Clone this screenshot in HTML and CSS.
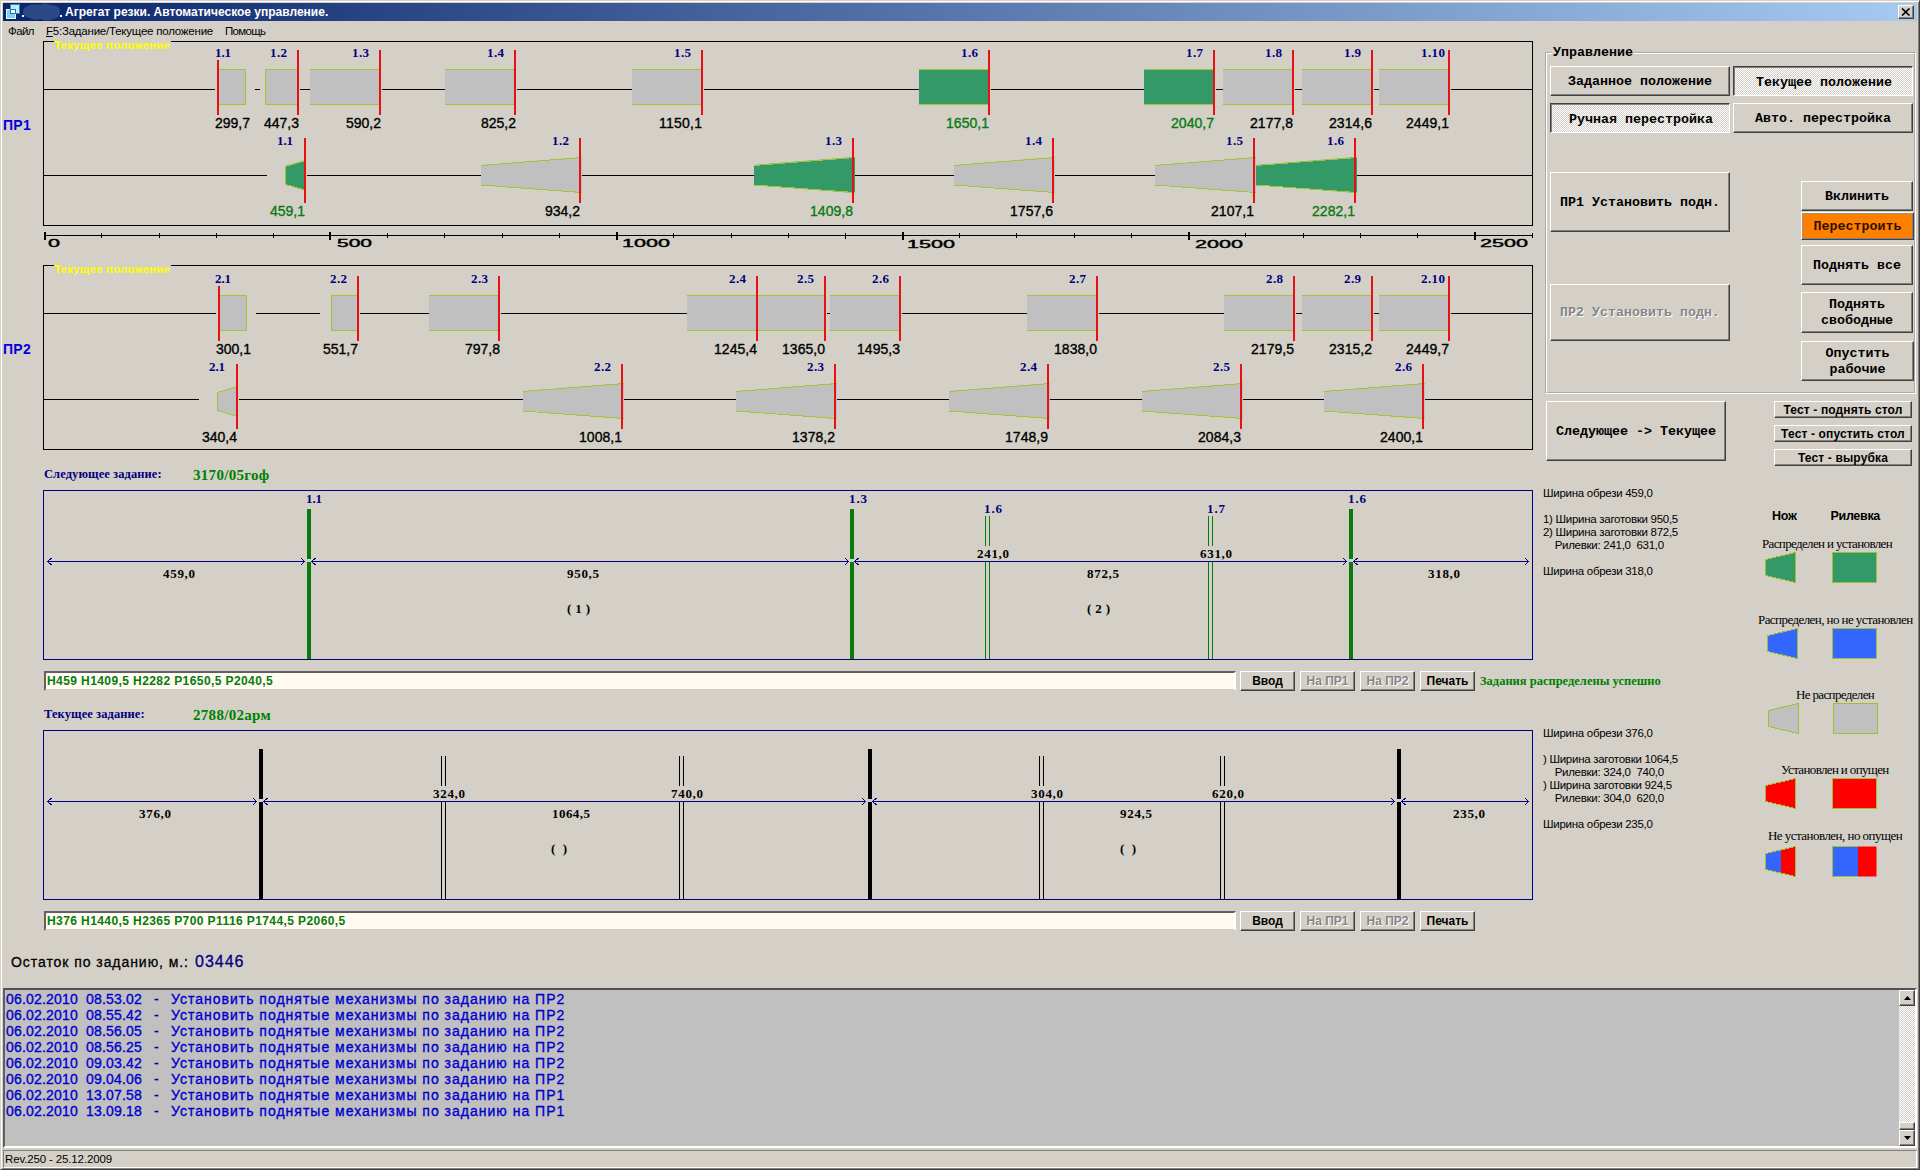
FILE: index.html
```html
<!DOCTYPE html>
<html lang="ru">
<head>
<meta charset="utf-8">
<title>Агрегат резки. Автоматическое управление.</title>
<link rel="stylesheet" href="styles.css">
</head>
<body>
<div class="window">
  <header class="titlebar">
    <svg class="app-icon" width="16" height="16" viewBox="0 0 16 16">
      <rect x="5.5" y=".5" width="9" height="9" fill="#bfefff" stroke="#2a86c8"/>
      <rect x="1.5" y="5.500" width="9" height="9" fill="#7fd4f4" stroke="#e8fbff"/>
      <rect x="5.500" y="5.500" width="5" height="4" fill="#f4ffff" stroke="#1c70b4"/>
    </svg>
    <svg class="smudge" width="40" height="18" viewBox="0 0 40 18">
      <path fill="#2b4887" d="M1 9Q1 4 6 3Q12 0 17 2Q24-1 29 2Q38 2 38 9Q38 15 31 16Q25 19 19 16Q12 18 8 15Q1 14 1 9Z"/>
      <path fill="#fff" d="M0 12h2v2h-2zM38 12h2v2h-2z"/>
    </svg>
    <h1 class="title">Агрегат резки. Автоматическое управление.</h1>
    <button class="close" aria-label="Закрыть"><svg width="10" height="8" viewBox="0 0 10 8"><path d="M1 .5L8.500 7.500M8.500 .5L1 7.500" stroke="#000" stroke-width="1.700"/></svg></button>
  </header>

  <nav class="menu">
    <span class="m1">Файл</span>
    <span class="m2"><u>F</u>5:Задание/Текущее положение</span>
    <span class="m3">Помощь</span>
  </nav>

  <main class="main">
    <section class="left">
      <div class="machine">
        <span class="machine-name">ПР1</span>
        <svg width="1490" height="185" viewBox="43 41 1490 185">
          <rect class="frame" x="43.5" y="41.5" width="1489" height="184"/>
          <rect class="cover" x="54" y="41" width="117" height="2"/>
          <text class="legend-title" x="54" y="49" textLength="116">Текущее положение</text>
          <path class="axis" d="M43 89.500H215M255 89.500h5M300 89.500h10M382 89.500h63M517 89.500h115M704 89.500h215M991 89.500h153M1216 89.500h7M1295 89.500h7M1374 89.500h5M1451 89.500h81"/>
          <path class="axis" d="M43 175.500H267M307 175.500H481M582 175.500H754M855 175.500H954M1055 175.500H1155M1357 175.500H1532"/>
          <path class="idle" d="M219 69h27v36h-27zM265 69h33v36h-33zM310 69h70v36h-70zM445 69h70v36h-70zM632 69h70v36h-70zM1223 69h70v36h-70zM1302 69h70v36h-70zM1379 69h70v36h-70z"/>
          <path class="set" d="M919 69h70v36h-70zM1144 69h70v36h-70z"/>
          <path class="edge" d="M219 69.500h26.500v35H219M298 69.500h-32.500v35H298M310 69.500h70M310 104.500h70M445 69.500h70M445 104.500h70M632 69.500h70M632 104.500h70M919 69.500h70M919 104.500h70M1144 69.500h70M1144 104.500h70M1223 69.500h70M1223 104.500h70M1302 69.500h70M1302 104.500h70M1379 69.500h70M1379 104.500h70"/>
          <path class="idle" d="M481 165L582 157V193L481 185zM954 165L1055 157V193L954 185zM1155 165L1256 157V193L1155 185z"/>
          <path class="set" d="M285 166L306 160V190L285 184zM754 165L855 157V193L754 185zM1256 165L1357 157V193L1256 185z"/>
          <path class="edge" d="M306 160.500L285.500 166.500V184.500L306 190.500M481 165.500L582 157.500M481 185L582 192.500M754 165.500L855 157.500M754 185L855 192.500M954 165.500L1055 157.500M954 185L1055 192.500M1155 165.500L1256 157.500M1155 185L1256 192.500M1256 165.500L1357 157.500M1256 185L1357 192.500"/>
          <path class="knife" d="M218 60V115M298 50V115M380 50V115M515 50V115M702 50V115M989 50V115M1214 50V115M1293 50V115M1372 50V115M1449 50V115M305 138V203M580 138V203M853 138V203M1053 138V203M1254 138V203M1355 138V203"/>
          <g class="num">
            <text x="215" y="57" textLength="16">1.1</text><text x="270" y="57" textLength="17">1.2</text><text x="352" y="57" textLength="17">1.3</text><text x="487" y="57" textLength="17">1.4</text><text x="674" y="57" textLength="17">1.5</text><text x="961" y="57" textLength="17">1.6</text><text x="1186" y="57" textLength="17">1.7</text><text x="1265" y="57" textLength="17">1.8</text><text x="1344" y="57" textLength="17">1.9</text><text x="1421" y="57" textLength="24">1.10</text>
            <text x="277" y="145" textLength="16">1.1</text><text x="552" y="145" textLength="17">1.2</text><text x="825" y="145" textLength="17">1.3</text><text x="1025" y="145" textLength="17">1.4</text><text x="1226" y="145" textLength="17">1.5</text><text x="1327" y="145" textLength="17">1.6</text>
          </g>
          <g class="pos">
            <text x="215" y="128" textLength="35">299,7</text><text x="264" y="128" textLength="35">447,3</text><text x="346" y="128" textLength="35">590,2</text><text x="481" y="128" textLength="35">825,2</text><text x="659" y="128" textLength="43">1150,1</text><text class="ok" x="946" y="128" textLength="43">1650,1</text><text class="ok" x="1171" y="128" textLength="43">2040,7</text><text x="1250" y="128" textLength="43">2177,8</text><text x="1329" y="128" textLength="43">2314,6</text><text x="1406" y="128" textLength="43">2449,1</text>
            <text class="ok" x="270" y="216" textLength="35">459,1</text><text x="545" y="216" textLength="35">934,2</text><text class="ok" x="810" y="216" textLength="43">1409,8</text><text x="1010" y="216" textLength="43">1757,6</text><text x="1211" y="216" textLength="43">2107,1</text><text class="ok" x="1312" y="216" textLength="43">2282,1</text>
          </g>
        </svg>
      </div>

      <svg class="scale" width="1490" height="39" viewBox="43 226 1490 39">
        <path class="axis" d="M45 235.500H1532M101.500 233v5M159.500 233v5M216.500 233v5M273.500 233v5M387.500 233v5M444.500 233v5M502.500 233v5M559.500 233v5M673.500 233v5M731.500 233v5M788.500 233v5M845.500 233v6M959.500 233v5M1016.500 233v5M1074.500 233v5M1131.500 233v5M1245.500 233v4M1303.500 233v5M1360.500 233v5M1417.500 233v5M1532.500 233v5"/>
        <path class="axis major" d="M45 232v8M330 232v8M617 232v8M903 232v8M1189 232v8M1475 232v8"/>
        <text x="48" y="247" textLength="12" lengthAdjust="spacingAndGlyphs">0</text><text x="337" y="247" textLength="35" lengthAdjust="spacingAndGlyphs">500</text><text x="622" y="247" textLength="48" lengthAdjust="spacingAndGlyphs">1000</text><text x="907" y="248" textLength="48" lengthAdjust="spacingAndGlyphs">1500</text><text x="1195" y="248" textLength="48" lengthAdjust="spacingAndGlyphs">2000</text><text x="1480" y="247" textLength="48" lengthAdjust="spacingAndGlyphs">2500</text>
      </svg>

      <div class="machine">
        <span class="machine-name">ПР2</span>
        <svg width="1490" height="185" viewBox="43 265 1490 185">
          <rect class="frame" x="43.5" y="265.5" width="1489" height="184"/>
          <rect class="cover" x="54" y="265" width="117" height="2"/>
          <text class="legend-title" x="54" y="273" textLength="116">Текущее положение</text>
          <path class="axis" d="M43 313.500H216M256 313.500H320M360 313.500H429M501 313.500H687M827 313.500h3M902 313.500H1027M1099 313.500H1224M1296 313.500h6M1374 313.500h5M1451 313.500h81"/>
          <path class="axis" d="M43 399.500H199M239 399.500H523M624 399.500H736M837 399.500H949M1050 399.500H1142M1243 399.500H1324M1425 399.500H1532"/>
          <path class="idle" d="M220 295h27v36h-27zM331 295h27v36h-27zM429 295h70v36h-70zM687 295h138v36h-138zM830 295h70v36h-70zM1027 295h70v36h-70zM1224 295h70v36h-70zM1302 295h70v36h-70zM1379 295h70v36h-70z"/>
          <path class="edge" d="M220 295.500h26.500v35H220M358 295.500h-26.500v35H358M429 295.500h70M429 330.500h70M687 295.500h138M687 330.500h138M830 295.500h70M830 330.500h70M1027 295.500h70M1027 330.500h70M1224 295.500h70M1224 330.500h70M1302 295.500h70M1302 330.500h70M1379 295.500h70M1379 330.500h70"/>
          <path class="idle" d="M217 392L238 386V416L217 410zM523 391L624 383V419L523 411zM736 391L837 383V419L736 411zM949 391L1050 383V419L949 411zM1142 391L1243 383V419L1142 411zM1324 391L1425 383V419L1324 411z"/>
          <path class="edge" d="M238 386.500L217.500 392.500V410.500L238 416.500M523 391.500L624 383.500M523 411L624 418.500M736 391.500L837 383.500M736 411L837 418.500M949 391.500L1050 383.500M949 411L1050 418.500M1142 391.500L1243 383.500M1142 411L1243 418.500M1324 391.500L1425 383.500M1324 411L1425 418.500"/>
          <path class="knife" d="M219 286V341M358 276V341M499 276V341M757 276V341M825 276V341M900 276V341M1097 276V341M1294 276V341M1372 276V341M1449 276V341M237 364V429M622 364V429M835 364V429M1048 364V429M1241 364V429M1423 364V429"/>
          <g class="num">
            <text x="215" y="283" textLength="16">2.1</text><text x="330" y="283" textLength="17">2.2</text><text x="471" y="283" textLength="17">2.3</text><text x="729" y="283" textLength="17">2.4</text><text x="797" y="283" textLength="17">2.5</text><text x="872" y="283" textLength="17">2.6</text><text x="1069" y="283" textLength="17">2.7</text><text x="1266" y="283" textLength="17">2.8</text><text x="1344" y="283" textLength="17">2.9</text><text x="1421" y="283" textLength="24">2.10</text>
            <text x="209" y="371" textLength="16">2.1</text><text x="594" y="371" textLength="17">2.2</text><text x="807" y="371" textLength="17">2.3</text><text x="1020" y="371" textLength="17">2.4</text><text x="1213" y="371" textLength="17">2.5</text><text x="1395" y="371" textLength="17">2.6</text>
          </g>
          <g class="pos">
            <text x="216" y="354" textLength="35">300,1</text><text x="323" y="354" textLength="35">551,7</text><text x="465" y="354" textLength="35">797,8</text><text x="714" y="354" textLength="43">1245,4</text><text x="782" y="354" textLength="43">1365,0</text><text x="857" y="354" textLength="43">1495,3</text><text x="1054" y="354" textLength="43">1838,0</text><text x="1251" y="354" textLength="43">2179,5</text><text x="1329" y="354" textLength="43">2315,2</text><text x="1406" y="354" textLength="43">2449,7</text>
            <text x="202" y="442" textLength="35">340,4</text><text x="579" y="442" textLength="43">1008,1</text><text x="792" y="442" textLength="43">1378,2</text><text x="1005" y="442" textLength="43">1748,9</text><text x="1198" y="442" textLength="43">2084,3</text><text x="1380" y="442" textLength="43">2400,1</text>
          </g>
        </svg>
      </div>

      <div class="task">
        <div class="task-head"><span class="task-label">Следующее задание:</span><span class="task-id">3170/05гоф</span></div>
        <svg width="1490" height="170" viewBox="43 490 1490 170">
          <rect class="frame navy" x="43.5" y="490.500" width="1489" height="169"/>
          <path class="blade ok" d="M307 509h4v50h-4zM307 562h4v97h-4zM850 509h4v50h-4zM850 562h4v97h-4zM1349 509h4v50h-4zM1349 562h4v97h-4z"/>
          <path class="crease ok" d="M985.500 516v30M989.500 516v30M985.500 561v98M989.500 561v98M1208.500 516v30M1212.500 516v30M1208.500 561v98M1212.500 561v98"/>
          <path class="dim" d="M47 561.500H305M311 561.500H849M854 561.500H1347M1353 561.500H1529"/>
          <path class="dim" d="M51.500 558L47.500 561.500L51.500 565M301 558L304.500 561.500L301 565M315.500 558L311.500 561.500L315.500 565M845 558L848.500 561.500L845 565M858.500 558L854.500 561.500L858.500 565M1343 558L1346.500 561.500L1343 565M1357.500 558L1353.500 561.500L1357.500 565M1525 558L1528.500 561.500L1525 565"/>
          <g class="num"><text x="306" y="503" textLength="16">1.1</text><text x="849" y="503" textLength="18">1.3</text><text x="984" y="513" textLength="18">1.6</text><text x="1207" y="513" textLength="18">1.7</text><text x="1348" y="503" textLength="18">1.6</text></g>
          <g class="size"><text x="163" y="578" textLength="32">459,0</text><text x="567" y="578" textLength="32">950,5</text><text x="977" y="558" textLength="32">241,0</text><text x="1200" y="558" textLength="32">631,0</text><text x="1087" y="578" textLength="32">872,5</text><text x="1428" y="578" textLength="32">318,0</text><text x="567" y="613" textLength="23">(1)</text><text x="1087" y="613" textLength="23">(2)</text></g>
        </svg>
        <div class="command">
          <div class="field">H459 H1409,5 H2282 P1650,5 P2040,5</div>
          <button class="btn">Ввод</button><button class="btn" disabled>На ПР1</button><button class="btn" disabled>На ПР2</button><button class="btn">Печать</button>
          <span class="result">Задания распределены успешно</span>
        </div>
      </div>

      <div class="task second">
        <div class="task-head"><span class="task-label">Текущее задание:</span><span class="task-id">2788/02арм</span></div>
        <svg width="1490" height="170" viewBox="43 730 1490 170">
          <rect class="frame navy" x="43.5" y="730.500" width="1489" height="169"/>
          <path class="blade" d="M259 749h4v50h-4zM259 802h4v97h-4zM868 749h4v50h-4zM868 802h4v97h-4zM1397 749h4v50h-4zM1397 802h4v97h-4z"/>
          <path class="crease" d="M441.500 756v30M445.500 756v30M441.500 801v98M445.500 801v98M679.500 756v30M683.500 756v30M679.500 801v98M683.500 801v98M1039.500 756v30M1043.500 756v30M1039.500 801v98M1043.500 801v98M1220.500 756v30M1224.500 756v30M1220.500 801v98M1224.500 801v98"/>
          <path class="dim" d="M47 801.500H257M263 801.500H866M872 801.500H1395M1401 801.500H1529"/>
          <path class="dim" d="M51.500 798L47.500 801.500L51.500 805M253 798L256.500 801.500L253 805M267.500 798L263.500 801.500L267.500 805M862 798L865.500 801.500L862 805M876.500 798L872.500 801.500L876.500 805M1391 798L1394.500 801.500L1391 805M1405.500 798L1401.500 801.500L1405.500 805M1525 798L1528.500 801.500L1525 805"/>
          <g class="size"><text x="139" y="818" textLength="32">376,0</text><text x="552" y="818" textLength="38">1064,5</text><text x="433" y="798" textLength="32">324,0</text><text x="671" y="798" textLength="32">740,0</text><text x="1031" y="798" textLength="32">304,0</text><text x="1212" y="798" textLength="32">620,0</text><text x="1120" y="818" textLength="32">924,5</text><text x="1453" y="818" textLength="32">235,0</text><text x="551" y="853" textLength="16">( )</text><text x="1120" y="853" textLength="16">( )</text></g>
        </svg>
        <div class="command">
          <div class="field">H376 H1440,5 H2365 P700 P1116 P1744,5 P2060,5</div>
          <button class="btn">Ввод</button><button class="btn" disabled>На ПР1</button><button class="btn" disabled>На ПР2</button><button class="btn">Печать</button>
        </div>
      </div>

      <p class="remain"><span class="r1">Остаток по заданию, м.:</span><span class="meters">03446</span></p>
    </section>

    <aside class="right">
      <fieldset class="control">
        <legend>Управление</legend>
        <div class="modes">
          <button class="key">Заданное положение</button><button class="key down">Текущее положение</button>
          <button class="key down">Ручная перестройка</button><button class="key">Авто. перестройка</button>
        </div>
        <div class="actions">
          <div class="machines-col">
            <button class="key pr1">ПР1 Установить подн.</button>
            <button class="key pr2" disabled>ПР2 Установить подн.</button>
          </div>
          <div class="lift-col">
            <button class="key k1">Вклинить</button>
            <button class="key hot">Перестроить</button>
            <button class="key k3">Поднять все</button>
            <button class="key k4">Поднять<br>свободные</button>
            <button class="key k5">Опустить<br>рабочие</button>
          </div>
        </div>
      </fieldset>
      <div class="below">
        <button class="key next">Следующее -&gt; Текущее</button>
        <div class="tests">
          <button class="key test">Тест - поднять стол</button>
          <button class="key test">Тест - опустить стол</button>
          <button class="key test">Тест - вырубка</button>
        </div>
      </div>
      <div class="info">
        <div class="reports">
<pre class="report">Ширина обрези 459,0

1) Ширина заготовки 950,5
2) Ширина заготовки 872,5
    Рилевки: 241,0  631,0

Ширина обрези 318,0</pre>
<pre class="report">Ширина обрези 376,0

) Ширина заготовки 1064,5
    Рилевки: 324,0  740,0
) Ширина заготовки 924,5
    Рилевки: 304,0  620,0

Ширина обрези 235,0</pre>
        </div>
        <div class="key-list">
          <div class="heads"><b>Нож</b><b>Рилевка</b></div>
          <figure class="state s1"><figcaption>Распределен и установлен</figcaption>
            <svg width="156" height="33"><path class="set outlined" d="M7.500 8.500L37.500 1.500V31.500L7.500 24.500zM74.500 1.500h44v30h-44z"/></svg></figure>
          <figure class="state s2"><figcaption>Распределен, но не установлен</figcaption>
            <svg width="156" height="33"><path class="assigned outlined" d="M9.500 8.500L39.500 1.500V31.500L9.500 24.500zM74.500 1.500h44v30h-44z"/></svg></figure>
          <figure class="state s3"><figcaption>Не распределен</figcaption>
            <svg width="156" height="33"><path class="idle outlined" d="M10.500 8.500L40.500 1.500V31.500L10.500 24.500zM75.500 1.500h44v30h-44z"/></svg></figure>
          <figure class="state s4"><figcaption>Установлен и опущен</figcaption>
            <svg width="156" height="33"><path class="lowered outlined" d="M7.500 8.500L37.500 1.500V31.500L7.500 24.500zM74.500 1.500h44v30h-44z"/></svg></figure>
          <figure class="state s5"><figcaption>Не установлен, но опущен</figcaption>
            <svg width="156" height="33"><path class="assigned" d="M7.500 8.500L23 5V28L7.500 24.500zM74.500 1.500h26v30h-26z"/><path class="lowered" d="M23 5L37.500 1.500V31.500L23 28zM100 1.500h18.500v30H100z"/><path class="outline" d="M7.500 8.500L37.500 1.500V31.500L7.500 24.500zM100 1.500H74.500v30H100"/></svg></figure>
        </div>
      </div>
    </aside>
  </main>

  <section class="log">
    <ol class="lines">
      <li><time>06.02.2010</time><time>08.53.02</time><i>-</i><span>Установить поднятые механизмы по заданию на ПР2</span></li>
      <li><time>06.02.2010</time><time>08.55.42</time><i>-</i><span>Установить поднятые механизмы по заданию на ПР2</span></li>
      <li><time>06.02.2010</time><time>08.56.05</time><i>-</i><span>Установить поднятые механизмы по заданию на ПР2</span></li>
      <li><time>06.02.2010</time><time>08.56.25</time><i>-</i><span>Установить поднятые механизмы по заданию на ПР2</span></li>
      <li><time>06.02.2010</time><time>09.03.42</time><i>-</i><span>Установить поднятые механизмы по заданию на ПР2</span></li>
      <li><time>06.02.2010</time><time>09.04.06</time><i>-</i><span>Установить поднятые механизмы по заданию на ПР2</span></li>
      <li><time>06.02.2010</time><time>13.07.58</time><i>-</i><span>Установить поднятые механизмы по заданию на ПР1</span></li>
      <li><time>06.02.2010</time><time>13.09.18</time><i>-</i><span>Установить поднятые механизмы по заданию на ПР1</span></li>
    </ol>
    <div class="scrollbar">
      <span class="arrow"><svg width="7" height="4"><path d="M0 4L3.500 0L7 4z"/></svg></span>
      <span class="thumb"></span>
      <span class="arrow"><svg width="7" height="4"><path d="M0 0L3.500 4L7 0z"/></svg></span>
    </div>
  </section>
  <footer class="status">Rev.250 - 25.12.2009</footer>
</div>
</body>
</html>
```
FILE: styles.css
```css
* { box-sizing: border-box; }
html, body { margin: 0; height: 100%; }
body {
  background: #d4d0c8;
  color: #000;
  font-family: "Liberation Sans", Arial, sans-serif;
  font-size: 12px;
  overflow: hidden;
}
button { font: inherit; color: inherit; padding: 0; margin: 0; }
svg { display: block; }

.window {
  width: 1920px;
  height: 1170px;
  display: flex;
  flex-direction: column;
  border: 1px solid;
  border-color: #d4d0c8 #404040 #404040 #d4d0c8;
  box-shadow: inset 1px 1px #fff, inset -1px -1px #808080;
  padding: 2px;
}

/* Title bar and menu */
.titlebar {
  height: 18px;
  flex: none;
  display: flex;
  align-items: center;
  padding: 0 3px 0 2px;
  background: linear-gradient(90deg, #0a246a, #a6caf0);
}
.smudge { margin-left: 1px; }
.title {
  margin: 0 auto 0 3px;
  color: #fff;
  font: bold 12px/18px "Liberation Sans", Arial, sans-serif;
  white-space: nowrap;
}
.close {
  width: 16px;
  height: 14px;
  display: grid;
  place-items: center;
  background: #d4d0c8;
  border: 1px solid;
  border-color: #fff #404040 #404040 #fff;
  box-shadow: inset -1px -1px #808080;
}
.menu {
  height: 20px;
  flex: none;
  display: flex;
  gap: 12px;
  padding-left: 5px;
  line-height: 20px;
  font-size: 11.500px;
  letter-spacing: -.22px;
  white-space: nowrap;
}
.m1 { letter-spacing: -.57px; }
.m3 { letter-spacing: -.7px; }

.main { height: 947px; flex: none; display: flex; }
.left { width: 1540px; flex: none; }
.right { flex: 1; padding: 4px 0 0 2px; }

/* Machine position diagrams */
.machine { height: 185px; display: flex; }
.machine-name {
  width: 40px;
  flex: none;
  padding-top: 76px;
  color: #0000e0;
  font: bold 14px/16px "Liberation Sans", Arial, sans-serif;
  letter-spacing: .27px;
}
.scale { margin-left: 40px; }
.scale text { font: 11.500px "Liberation Sans", Arial, sans-serif; stroke: #000; stroke-width: .4; }
.frame, .axis, .edge, .knife, .crease, .dim, .outline, .outlined { shape-rendering: crispEdges; }
.frame, .axis, .edge, .knife, .crease, .dim, .outline { fill: none; }
.frame, .axis { stroke: #000; }
.major { stroke-width: 2; }
.navy, .dim { stroke: #000080; }
.cover { fill: #d4d0c8; }
.legend-title { font: bold 11.500px "Liberation Sans", Arial, sans-serif; fill: #ff0; }
.idle { fill: #c0c0c0; }
.set { fill: #339966; }
.assigned { fill: #3366ff; }
.lowered { fill: #f00; }
.outlined, .outline { stroke: #9fc030; }
.edge { stroke: #a3c433; }
.knife { stroke: #e81010; stroke-width: 2; }
.num { font: bold 13px "Liberation Serif", "Times New Roman", serif; fill: #000080; }
.pos { font: 14px "Liberation Sans", Arial, sans-serif; stroke: #000; stroke-width: .35; }
.pos .ok { fill: #087a10; stroke: #087a10; }

/* Tasks */
.task { padding-left: 40px; }
.task-head { height: 40px; display: flex; padding: 14px 0 0 1px; white-space: nowrap; }
.second .task-head { height: 39px; padding-top: 13px; }
.task-label { width: 149px; color: #000080; font: bold 12.500px/20px "Liberation Serif", "Times New Roman", serif; letter-spacing: .08px; }
.task-id { color: #008000; font: bold 15px/22px "Liberation Serif", "Times New Roman", serif; letter-spacing: .3px; }
.blade { fill: #000; }
.crease { stroke: #000; }
.blade.ok { fill: #087a10; }
.crease.ok { stroke: #087a10; }
.size { font: bold 13px "Liberation Serif", "Times New Roman", serif; }
.command { display: flex; gap: 5px; height: 31px; padding: 11px 0 0 1px; white-space: nowrap; }
.field {
  flex: none;
  width: 1192px;
  height: 20px;
  margin-right: -1px;
  padding: 0 0 0 1px;
  background: #fffbf0;
  border: 2px solid;
  border-color: #606060 #fff #d4d0c8 #606060;
  color: #087a10;
  font: bold 12px/17px "Liberation Sans", Arial, sans-serif;
  letter-spacing: .41px;
}
.btn {
  flex: none;
  width: 55px;
  height: 20px;
  background: #d4d0c8;
  border: 1px solid;
  border-color: #fff #404040 #404040 #fff;
  box-shadow: inset -1px -1px #808080;
  font: bold 12px/17px "Liberation Sans", Arial, sans-serif;
}
.btn:disabled, .key:disabled { color: #858585; text-shadow: 1px 1px #fff; }
.result { color: #008000; font: bold 12.500px/21px "Liberation Serif", "Times New Roman", serif; }
.remain { display: flex; align-items: baseline; margin: 0; padding: 19px 0 0 8px; font-size: 14px; line-height: 24px; -webkit-text-stroke: .3px; white-space: nowrap; }
.r1 { width: 184px; letter-spacing: .94px; }
.meters { color: #000080; font-size: 16px; letter-spacing: 1px; }

/* Control panel */
.control {
  width: 371px;
  height: 349px;
  margin: 0;
  padding: 5px 0 0 3px;
  border: 2px groove #fff;
  font: bold 13.330px/16px "Liberation Mono", "Courier New", monospace;
}
.control legend { height: 16px; margin-left: 2px; padding: 0 1px; }
.modes { display: grid; grid-template-columns: 180px 180px; grid-auto-rows: 30px; gap: 7px 3px; }
.key {
  padding: 1px 0 0;
  background: #d4d0c8;
  border: 1px solid;
  border-color: #fff #404040 #404040 #fff;
  box-shadow: inset -1px -1px #808080;
  white-space: nowrap;
}
.down {
  padding: 3px 0 0 2px;
  background: repeating-conic-gradient(#fff 0 25%, #d4d0c8 0 50%) 0 0 / 2px 2px;
  border-color: #404040 #fff #fff #404040;
  box-shadow: inset 1px 1px #808080;
}
.actions { display: flex; justify-content: space-between; }
.machines-col { width: 180px; padding-top: 39px; display: flex; flex-direction: column; gap: 52px; }
.pr1 { height: 60px; }
.pr2 { height: 57px; }
.lift-col { width: 113px; padding-top: 48px; display: flex; flex-direction: column; align-items: flex-start; }
.k1, .k3, .k4 { width: 112px; }
.k1 { height: 30px; }
.hot { width: 113px; height: 28px; margin: 1px 0 5px; background: #ff8000; color: #301000; box-shadow: inset 1px 1px #a09080, inset -1px -1px #808080; }
.k3 { height: 40px; }
.k4 { height: 41px; margin: 7px 0 8px; }
.k5 { width: 113px; height: 40px; }

.below { display: flex; justify-content: space-between; width: 367px; padding: 7px 0 0 1px; font: bold 13.330px/16px "Liberation Mono", "Courier New", monospace; }
.next { width: 180px; height: 60px; }
.tests { display: flex; flex-direction: column; gap: 7px; }
.test { width: 138px; height: 17px; padding: 0; font: bold 12px/14px "Liberation Sans", Arial, sans-serif; letter-spacing: .14px; }

/* Task reports and colour key */
.info { display: flex; }
.reports { width: 213px; display: flex; flex-direction: column; gap: 149px; padding-top: 21px; }
.report { margin: 0; margin-left: -2px; height: 91px; font: 11.500px/13px "Liberation Sans", Arial, sans-serif; letter-spacing: -.28px; }
.key-list { width: 156px; padding-top: 42px; }
.heads { display: flex; gap: 34px; padding-left: 14px; font-size: 12.500px; line-height: 16px; letter-spacing: -.3px; margin-bottom: 12px; }
.state { margin: 0; height: 75px; white-space: nowrap; font: 13px/16px "Liberation Serif", "Times New Roman", serif; letter-spacing: -.64px; }
.state svg { margin-top: -1px; }
.s1 { height: 76px; }
.s1 figcaption { padding-left: 4px; }
.s2 { letter-spacing: -.57px; }
.s3 figcaption { padding-left: 38px; }
.s4 { height: 66px; }
.s4 figcaption { padding-left: 23px; }
.s5 { letter-spacing: -.53px; }
.s5 figcaption { padding-left: 10px; }
.s5 svg { margin-top: 1px; }

/* Event log */
.log {
  height: 160px;
  flex: none;
  display: flex;
  justify-content: space-between;
  background: #c0c0c0;
  border: 2px solid;
  border-color: #505050 #fff #fff #606060;
}
.lines { list-style: none; margin: 0; padding: 1px 0 0 1px; color: #0000d0; font-size: 14px; line-height: 16px; -webkit-text-stroke: .35px; }
.lines li { display: grid; grid-template-columns: 80px 68px 17px auto; white-space: nowrap; }
.lines time { letter-spacing: .19px; }
.lines span { letter-spacing: 1px; }
.lines i { font-style: normal; }
.scrollbar { width: 16px; display: flex; flex-direction: column; background: repeating-conic-gradient(#fff 0 25%, #d4d0c8 0 50%) 0 0 / 2px 2px; }
.arrow, .thumb { background: #d4d0c8; border: 1px solid; border-color: #fff #404040 #404040 #fff; box-shadow: inset -1px -1px #808080; }
.arrow { height: 16px; display: grid; place-items: center; }
.thumb { height: 8px; margin-top: auto; }
.status { height: 18px; margin-top: 2px; border: 1px solid; border-color: #808080 #fff #fff #808080; font-size: 11.500px; line-height: 16px; padding-left: 1px; letter-spacing: -.14px; }
```
